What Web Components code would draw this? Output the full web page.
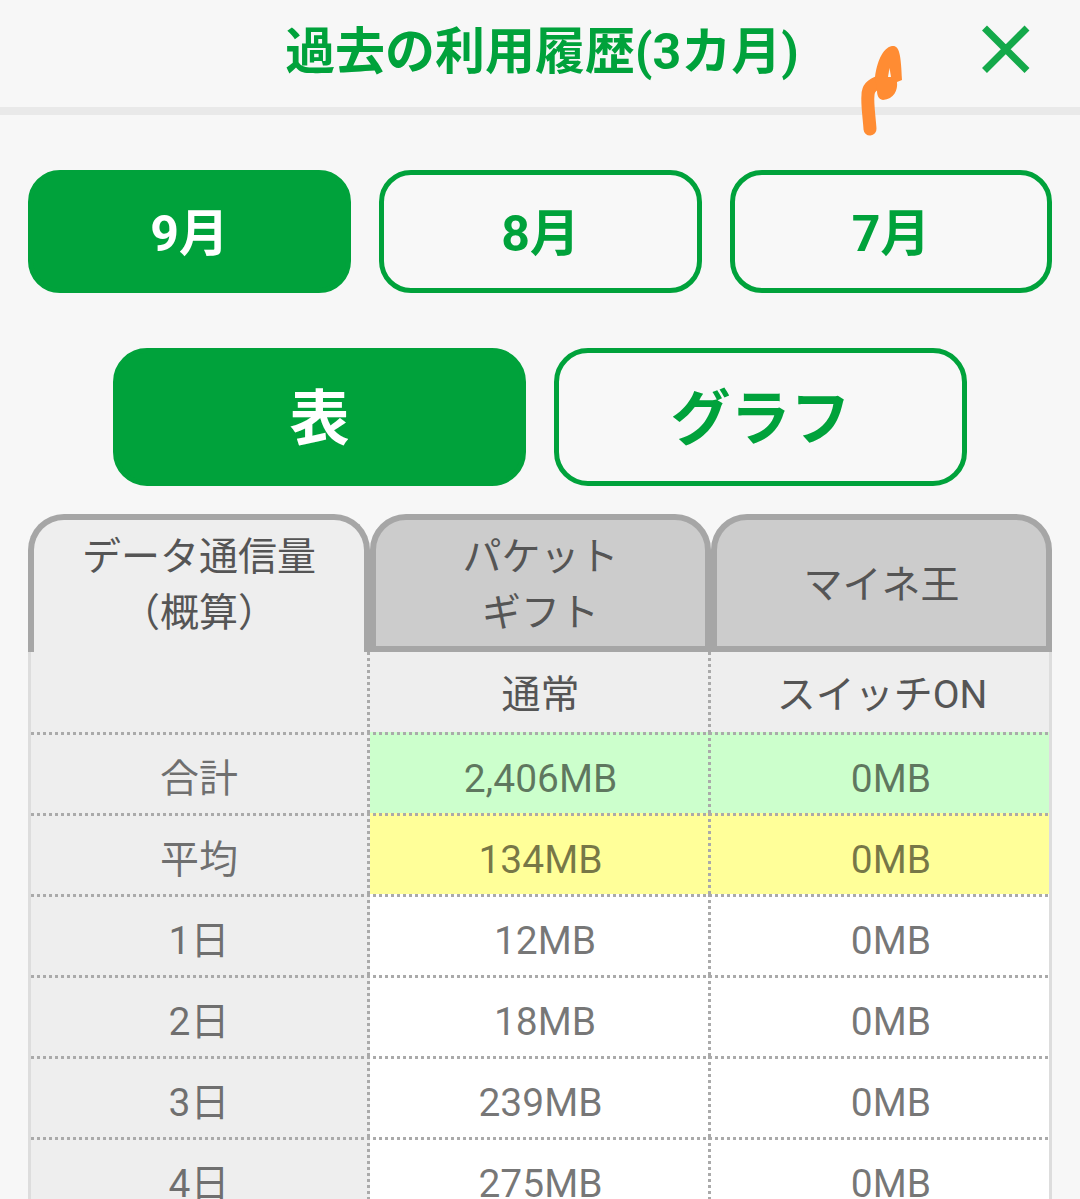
<!DOCTYPE html>
<html lang="ja"><head><meta charset="utf-8"><title>過去の利用履歴</title>
<style>
html,body{margin:0;height:1199px;overflow:hidden;background:#f7f7f7}
body{font-family:Roboto,"Noto Sans CJK JP",sans-serif;position:relative}
</style></head><body>
<history-screen>
<app-header>過去の利用履歴(3カ月)</app-header>
<pill-row kind="month">
  <pill-button active>9月</pill-button><pill-button>8月</pill-button><pill-button>7月</pill-button>
</pill-row>
<pill-row kind="view">
  <pill-button active>表</pill-button><pill-button>グラフ</pill-button>
</pill-row>
<tab-bar>
  <tab-head active>データ通信量<br>（概算）</tab-head>
  <tab-head>パケット<br>ギフト</tab-head>
  <tab-head>マイネ王</tab-head>
</tab-bar>
<usage-table>
  <usage-row kind="sub" first><span></span><span>通常</span><usage-val>スイッチON</usage-val></usage-row>
  <usage-row tone="green"><span>合計</span><span>2,406MB</span><usage-val>0MB</usage-val></usage-row>
  <usage-row tone="yellow"><span>平均</span><span>134MB</span><usage-val>0MB</usage-val></usage-row>
  <usage-row><span>1日</span><usage-val>12MB</usage-val><usage-val>0MB</usage-val></usage-row>
  <usage-row><span>2日</span><usage-val>18MB</usage-val><usage-val>0MB</usage-val></usage-row>
  <usage-row><span>3日</span><span>239MB</span><usage-val>0MB</usage-val></usage-row>
  <usage-row><span>4日</span><span>275MB</span><usage-val>0MB</usage-val></usage-row>
</usage-table>
<pen-scribble></pen-scribble>
</history-screen>
<script>
const GREEN='#00a23b';
function def(name,css,html){
  customElements.define(name,class extends HTMLElement{
    connectedCallback(){
      if(this.shadowRoot)return;
      this.attachShadow({mode:'open'}).innerHTML=`<style>${css}</style>${html}`;
    }
  });
}
def('history-screen',`:host{display:block;height:1199px;overflow:hidden;position:relative}`,`<slot></slot>`);
def('app-header',`
:host{display:flex;align-items:center;justify-content:center;box-sizing:border-box;height:115px;border-bottom:8px solid #e9e9e9;position:relative;
  color:${GREEN};font-size:50px;font-weight:700;line-height:60px;padding-left:4px;padding-bottom:3px}
svg{position:absolute;left:976px;top:20px;width:60px;height:60px}`,
`<span><slot></slot></span><svg viewBox="0 0 60 60" aria-label="閉じる"><path d="M8.5 8 L51 50.5 M51 8 L8.5 50.5" stroke="${GREEN}" stroke-width="7" fill="none" opacity=".92"/></svg>`);
def('pill-row',`
:host{display:flex;justify-content:center;gap:28px;box-sizing:border-box}
:host([kind=month]){height:123px;margin:55px 28px 0;--h:123px;--fs:50px;--r:32px;--pt:5px}
:host([kind=month]) ::slotted(*){width:323px;flex:none}
:host([kind=month]) ::slotted(:last-child){width:322px}
:host([kind=view]){height:138px;margin:55px 0 0;--h:138px;--fs:60px;--r:34px;--pt:6px}
:host([kind=view]) ::slotted(*){width:413px;flex:none}`,`<slot></slot>`);
def('pill-button',`
:host{display:flex;align-items:center;justify-content:center;box-sizing:border-box;height:var(--h);border:5px solid ${GREEN};border-radius:var(--r);
 color:${GREEN};font-size:var(--fs);line-height:1.2;font-weight:700;padding-top:var(--pt);background:#f8f8f8}
:host([active]){background:${GREEN};color:#fff}`,`<slot></slot>`);
def('tab-bar',`:host{display:grid;grid-template-columns:342px 341px 341px;margin:28px 28px 0;height:138px;box-sizing:border-box;width:1024px}`,`<slot></slot>`);
def('tab-head',`
:host{display:flex;align-items:center;justify-content:center;text-align:center;box-sizing:border-box;background:#ccc;border:6px solid #a6a6a6;border-radius:36px 36px 0 0;
 color:#555;font-size:39px;line-height:56px;padding-top:3px}
:host([active]){background:#eee;border-bottom:0;padding-bottom:3px;padding-top:0}`,`<div><slot></slot></div>`);
def('usage-table',`:host{display:block;width:1024px;margin-left:28px;box-sizing:border-box;background:#fff;border-left:3px solid #ddd;border-right:3px solid #ddd}`,`<slot></slot>`);
def('usage-row',`
:host{display:grid;grid-template-columns:339px 341px 338px;height:81px;box-sizing:border-box;color:rgba(0,0,0,.54);font-size:39px;line-height:50px;position:relative}
:host([first]){height:80px;color:#555}
:host([tone=green]) ::slotted(:not(:first-child)){background:#ccffcc}
:host([tone=yellow]) ::slotted(:not(:first-child)){background:#ffff99}
:host([kind=sub]) ::slotted(*){background:#eee}
::slotted(*){display:flex;align-items:center;justify-content:center;box-sizing:border-box;padding-top:12px}
:host([kind=sub]) ::slotted(*){padding-top:6px}
::slotted(:first-child){background:#eee;padding-right:3px}
::slotted(usage-val:nth-child(2)){padding-left:9px}
::slotted(usage-val:nth-child(3)){padding-left:22px}
:host([kind=sub]) ::slotted(usage-val:nth-child(3)){padding-left:4px}
i{position:absolute;pointer-events:none}
.h{left:0;right:0;top:0;height:3px;background:repeating-linear-gradient(90deg,#aaa 0 3px,transparent 3px 6px)}
:host([first]) .h{display:none}
.v{top:0;bottom:0;width:3px;background:repeating-linear-gradient(180deg,#aaa 0 3px,transparent 3px 6px)}
.a{left:336px}.b{left:677px}
`,`<slot></slot><i class="h"></i><i class="v a"></i><i class="v b"></i>`);
def('usage-val',`:host{display:block}`,`<slot></slot>`);
def('pen-scribble',`:host{position:absolute;left:850px;top:35px;width:60px;height:110px;pointer-events:none}svg{display:block}`,
`<svg width="60" height="110" viewBox="0 0 60 110"><path d="M20 94 C19 80 17 68 18 60 C18 53 23 49 30 47" stroke="#ff8c33" stroke-width="13" stroke-linecap="round" fill="none"/><path d="M33 65 C28 64 27 60 27 55 L25 42 C27 28 32 13 42 11 C49 10 51 18 52 45 L47 47 C48 55 44 64 33 65Z" fill="#ff8c33"/><path d="M38 42 L39.5 33 L41 42Z" fill="#f7f7f7"/></svg>`);
</script>
</body></html>
